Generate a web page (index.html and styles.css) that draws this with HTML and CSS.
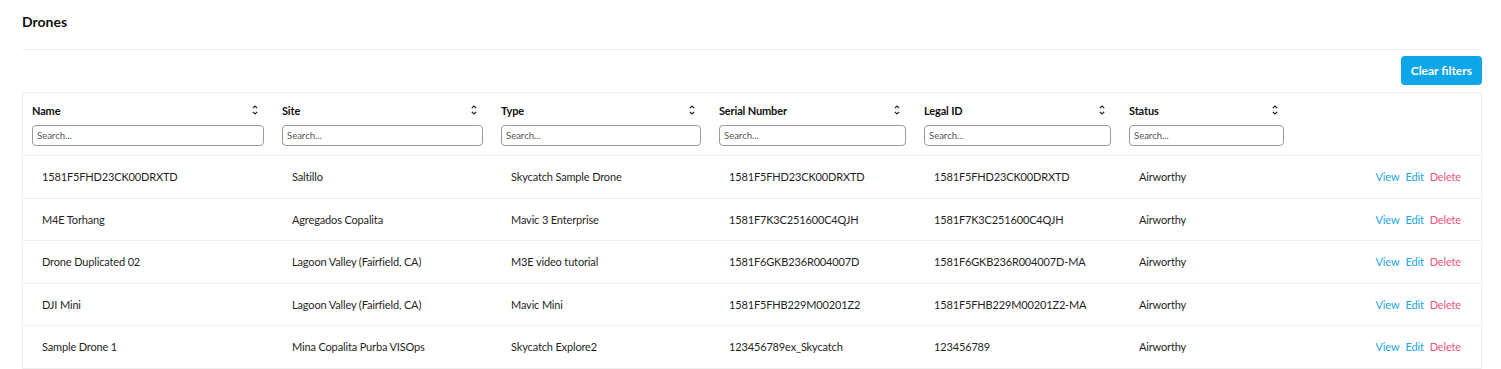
FILE: index.html
```html
<!DOCTYPE html>
<html lang="en">
<head>
    <meta charset="UTF-8">
    <meta name="viewport" content="width=device-width, initial-scale=1.0">
    <title>Drones</title>
    <link rel="stylesheet" href="styles.css">
</head>
<body>
    <div class="page">
        <h1 class="title">Drones</h1>
        <div class="toolbar">
            <button type="button" class="btn-clear">Clear filters</button>
        </div>
        <div class="table-wrap">
            <table class="drones">
                <colgroup>
                    <col style="width:250px">
                    <col style="width:219px">
                    <col style="width:218px">
                    <col style="width:205px">
                    <col style="width:205px">
                    <col style="width:173px">
                    <col>
                </colgroup>
                <thead>
                    <tr>
                        <th>
                            <div class="th-label"><span>Name</span><svg class="sort" viewBox="0 0 6 12"><path d="M0.8 4.2 L3 2 L5.2 4.2 M0.8 7.8 L3 10 L5.2 7.8"/></svg></div>
                            <input type="text" class="search" placeholder="Search...">
                        </th>
                        <th>
                            <div class="th-label"><span>Site</span><svg class="sort" viewBox="0 0 6 12"><path d="M0.8 4.2 L3 2 L5.2 4.2 M0.8 7.8 L3 10 L5.2 7.8"/></svg></div>
                            <input type="text" class="search" placeholder="Search...">
                        </th>
                        <th>
                            <div class="th-label"><span>Type</span><svg class="sort" viewBox="0 0 6 12"><path d="M0.8 4.2 L3 2 L5.2 4.2 M0.8 7.8 L3 10 L5.2 7.8"/></svg></div>
                            <input type="text" class="search" placeholder="Search...">
                        </th>
                        <th>
                            <div class="th-label"><span>Serial Number</span><svg class="sort" viewBox="0 0 6 12"><path d="M0.8 4.2 L3 2 L5.2 4.2 M0.8 7.8 L3 10 L5.2 7.8"/></svg></div>
                            <input type="text" class="search" placeholder="Search...">
                        </th>
                        <th>
                            <div class="th-label"><span>Legal ID</span><svg class="sort" viewBox="0 0 6 12"><path d="M0.8 4.2 L3 2 L5.2 4.2 M0.8 7.8 L3 10 L5.2 7.8"/></svg></div>
                            <input type="text" class="search" placeholder="Search...">
                        </th>
                        <th>
                            <div class="th-label"><span>Status</span><svg class="sort" viewBox="0 0 6 12"><path d="M0.8 4.2 L3 2 L5.2 4.2 M0.8 7.8 L3 10 L5.2 7.8"/></svg></div>
                            <input type="text" class="search" placeholder="Search...">
                        </th>
                        <th></th>
                    </tr>
                </thead>
                <tbody>
                    <tr>
                        <td>1581F5FHD23CK00DRXTD</td>
                        <td>Saltillo</td>
                        <td>Skycatch Sample Drone</td>
                        <td>1581F5FHD23CK00DRXTD</td>
                        <td>1581F5FHD23CK00DRXTD</td>
                        <td>Airworthy</td>
                        <td class="actions"><a class="act-view">View</a><a class="act-edit">Edit</a><a class="act-delete">Delete</a></td>
                    </tr>
                    <tr>
                        <td>M4E Torhang</td>
                        <td>Agregados Copalita</td>
                        <td>Mavic 3 Enterprise</td>
                        <td>1581F7K3C251600C4QJH</td>
                        <td>1581F7K3C251600C4QJH</td>
                        <td>Airworthy</td>
                        <td class="actions"><a class="act-view">View</a><a class="act-edit">Edit</a><a class="act-delete">Delete</a></td>
                    </tr>
                    <tr>
                        <td>Drone Duplicated 02</td>
                        <td>Lagoon Valley (Fairfield, CA)</td>
                        <td>M3E video tutorial</td>
                        <td>1581F6GKB236R004007D</td>
                        <td>1581F6GKB236R004007D-MA</td>
                        <td>Airworthy</td>
                        <td class="actions"><a class="act-view">View</a><a class="act-edit">Edit</a><a class="act-delete">Delete</a></td>
                    </tr>
                    <tr>
                        <td>DJI Mini</td>
                        <td>Lagoon Valley (Fairfield, CA)</td>
                        <td>Mavic Mini</td>
                        <td>1581F5FHB229M00201Z2</td>
                        <td>1581F5FHB229M00201Z2-MA</td>
                        <td>Airworthy</td>
                        <td class="actions"><a class="act-view">View</a><a class="act-edit">Edit</a><a class="act-delete">Delete</a></td>
                    </tr>
                    <tr>
                        <td>Sample Drone 1</td>
                        <td>Mina Copalita Purba VISOps</td>
                        <td>Skycatch Explore2</td>
                        <td>123456789ex_Skycatch</td>
                        <td>123456789</td>
                        <td>Airworthy</td>
                        <td class="actions"><a class="act-view">View</a><a class="act-edit">Edit</a><a class="act-delete">Delete</a></td>
                    </tr>
                </tbody>
            </table>
        </div>
    </div>
</body>
</html>
```

FILE: styles.css
```css
* {
    box-sizing: border-box;
}
body {
    margin: 0;
    background-color: #ffffff;
    color: #1f1f1f;
    font-family: Lato, "Open Sans", sans-serif;
}
.page {
    padding: 0 19px 0 22px;
}
.title {
    margin: 0;
    padding: 13px 0 0;
    height: 50px;
    font-size: 14px;
    font-weight: 700;
    color: #111;
    border-bottom: 1px solid #efefef;
}
.toolbar {
    display: flex;
    justify-content: flex-end;
    padding: 6px 0 7px;
}
.btn-clear {
    background-color: #0ea5e9;
    color: #ffffff;
    font-family: inherit;
    font-size: 12px;
    font-weight: 700;
    height: 29px;
    padding: 0 10px;
    border: none;
    border-radius: 4px;
    cursor: pointer;
}
.table-wrap {
    border: 1px solid #efefef;
    border-bottom: none;
}
table.drones {
    width: 100%;
    table-layout: fixed;
    border-collapse: collapse;
    font-size: 11px;
    letter-spacing: -0.15px;
}
table.drones th {
    text-align: left;
    vertical-align: top;
    padding: 9px 9px 9px 9px;
    border-bottom: 1px solid #efefef;
}
.th-label {
    display: flex;
    justify-content: space-between;
    align-items: center;
    height: 16px;
    margin-bottom: 7px;
    font-size: 11px;
    font-weight: 700;
    color: #111;
}
.sort {
    width: 6px;
    height: 12px;
    margin-right: 6px;
    fill: none;
    stroke: #222;
    stroke-width: 1.2;
}
.search {
    display: block;
    width: 100%;
    height: 21px;
    padding: 0 4px;
    border: 1px solid #9a9a9a;
    border-radius: 4px;
    font-family: inherit;
    font-size: 9.5px;
    color: #333;
}
.search::placeholder {
    color: #555;
}
table.drones td {
    height: 42.5px;
    padding: 0 10px 0 19px;
    border-bottom: 1px solid #efefef;
    white-space: nowrap;
    color: #1f1f1f;
}
table.drones td.actions {
    text-align: right;
    padding-right: 20px;
}
.actions a {
    margin-left: 6px;
    cursor: pointer;
}
.act-view, .act-edit {
    color: #1ba6e4;
}
.act-delete {
    color: #f0557a;
}
```
